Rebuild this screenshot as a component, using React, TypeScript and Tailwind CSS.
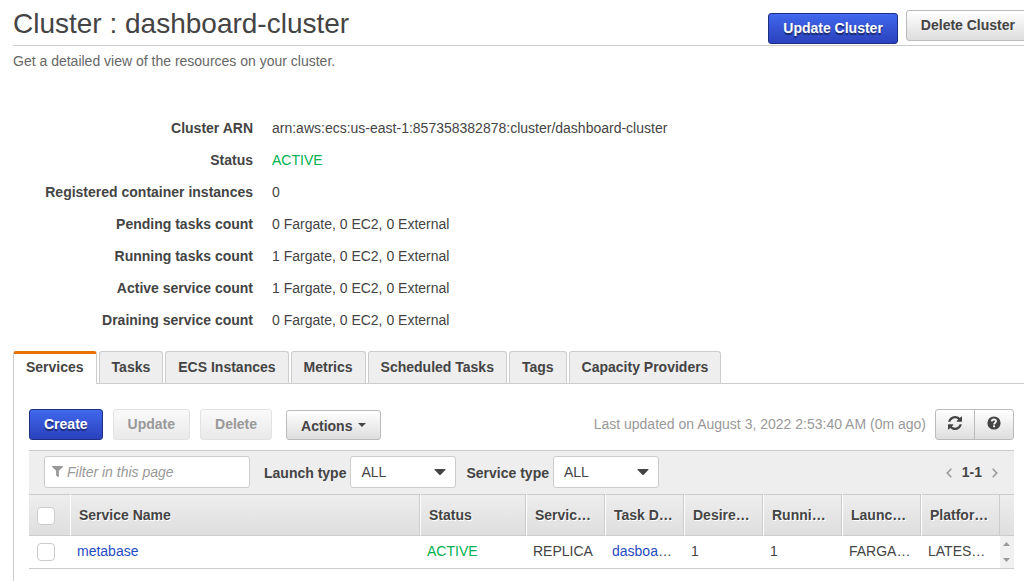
import React, { useState } from "react";
import { FaFilter } from "react-icons/fa";

const details = [
  { label: "Cluster ARN", value: "arn:aws:ecs:us-east-1:857358382878:cluster/dashboard-cluster" },
  { label: "Status", value: "ACTIVE", active: true },
  { label: "Registered container instances", value: "0" },
  { label: "Pending tasks count", value: "0 Fargate, 0 EC2, 0 External" },
  { label: "Running tasks count", value: "1 Fargate, 0 EC2, 0 External" },
  { label: "Active service count", value: "1 Fargate, 0 EC2, 0 External" },
  { label: "Draining service count", value: "0 Fargate, 0 EC2, 0 External" },
];

const tabs = ["Services", "Tasks", "ECS Instances", "Metrics", "Scheduled Tasks", "Tags", "Capacity Providers"];

const columns = ["Service Name", "Status", "Servic…", "Task D…", "Desire…", "Runni…", "Launc…", "Platfor…"];

const variants = {
  primary:
    "border-[#1c2f83] bg-linear-to-b from-[#4168ed] to-[#2b41bd] text-white [text-shadow:0_2px_1px_rgba(0,0,0,0.5)]",
  normal: "border-[#bbb] bg-linear-to-b from-white to-[#dedede] text-[#444]",
  disabled: "border-[#e2e2e2] bg-linear-to-b from-[#fafafa] to-[#e9e9e9] text-[#999]",
};

function Button({
  variant = "normal",
  className = "h-[31px] pb-[2px]",
  children,
}: {
  variant?: keyof typeof variants;
  className?: string;
  children: React.ReactNode;
}) {
  return (
    <button
      type="button"
      disabled={variant === "disabled"}
      className={`flex shrink-0 items-center rounded-[3px] border px-[14px] font-bold whitespace-nowrap ${variants[variant]} ${className}`}
    >
      {children}
    </button>
  );
}

function RefreshIcon() {
  return (
    <svg viewBox="0 0 1536 1536" className="size-[14px]" fill="currentColor" aria-hidden="true">
      <path d="M1511 928q0 5-1 7-64 268-268 434.5t-478 166.5q-146 0-282.5-55t-243.5-157l-129 129q-19 19-45 19t-45-19-19-45v-448q0-26 19-45t45-19h448q26 0 45 19t19 45-19 45l-137 137q71 66 161 102t187 36q134 0 250-65t186-179q11-17 53-117 8-23 30-23h192q13 0 22.5 9.5t9.5 22.5zm25-800v448q0 26-19 45t-45 19h-448q-26 0-45-19t-19-45 19-45l138-138q-148-137-349-137-134 0-250 65t-186 179q-11 17-53 117-8 23-30 23h-199q-13 0-22.5-9.5t-9.5-22.5v-7q65-268 270-434.5t480-166.5q146 0 284 55.5t245 156.5l130-129q19-19 45-19t45 19 19 45z" />
    </svg>
  );
}

function HelpIcon() {
  return (
    <svg viewBox="0 0 14 14" className="size-[14px]" aria-hidden="true">
      <circle cx="7" cy="7" r="6.6" fill="#444" />
      <path d="M4.7 5.3C5 2.9 9.2 3 9.1 5.3 9 6.7 7.1 6.7 7.1 8.4" fill="none" stroke="#f4f4f4" strokeWidth="1.9" />
      <path d="M6.1 9.3h2v1.9h-2z" fill="#f4f4f4" />
    </svg>
  );
}

function Chevron({ d }: { d: string }) {
  return (
    <svg viewBox="0 0 6 10" className="h-[10px] w-[6px]" fill="none" stroke="#999" strokeWidth="1.6" aria-hidden="true">
      <path d={d} />
    </svg>
  );
}

function FilterSelect({ id, label, options }: { id: string; label: string; options: string[] }) {
  return (
    <div className="flex shrink-0 items-center gap-1">
      <label htmlFor={id} className="pt-[2px] font-bold">
        {label}
      </label>
      <div className="relative">
        <select
          id={id}
          className="h-8 w-[106px] appearance-none rounded-[3px] border border-[#ccc] bg-white px-[10px] text-[#444]"
        >
          {options.map((o) => (
            <option key={o}>{o}</option>
          ))}
        </select>
        <svg
          viewBox="0 0 12 6"
          className="pointer-events-none absolute top-[13px] right-[10px] h-[6px] w-3"
          fill="#444"
          aria-hidden="true"
        >
          <path d="M1 0h10q1 0 .3.9L6.7 5.7q-.7.5-1.4 0L.7.9Q0 0 1 0z" />
        </svg>
      </div>
    </div>
  );
}

const tick = "block size-[18px] appearance-none rounded-[4px] border border-[#ccc] bg-white checked:bg-[#4168ed]";
const cell = "pl-[7px] pb-[2px] whitespace-nowrap";
const link = "text-[#1f4bc4] hover:underline";

export default function App() {
  const [tab, setTab] = useState("Services");

  return (
    <div className="flex min-h-screen flex-col overflow-hidden bg-white pl-[13px] font-['Liberation_Sans',Arial,sans-serif] text-[14px] leading-5 text-[#444]">
      <header className="flex h-[46px] justify-between border-b border-[#ccc]">
        <h1 className="self-center pt-[2px] text-[28px] leading-8 whitespace-nowrap">Cluster : dashboard-cluster</h1>
        <div className="-mr-[6px] flex gap-2 pt-[10px] pb-px">
          <Button variant="primary" className="h-[31px] self-end pb-[2px]">
            Update Cluster
          </Button>
          <Button className="h-[31px] self-start pb-[2px]">Delete Cluster</Button>
        </div>
      </header>
      <p className="mt-[5px] text-[#666]">Get a detailed view of the resources on your cluster.</p>

      <dl className="mt-[41px] grid grid-cols-[240px_1fr] gap-x-[19px]">
        {details.map((d) => (
          <React.Fragment key={d.label}>
            <dt className="text-right leading-8 font-bold">{d.label}</dt>
            <dd className={`leading-8 ${d.active ? "text-[#00b14f]" : ""}`}>{d.value}</dd>
          </React.Fragment>
        ))}
      </dl>

      <main className="mt-[15px] flex flex-1 flex-col">
        <div role="tablist" className="flex gap-[2px] border-b border-[#ccc]">
          {tabs.map((t) => (
            <button
              key={t}
              type="button"
              role="tab"
              aria-selected={t === tab}
              onClick={() => setTab(t)}
              className={`rounded-t-[3px] border-x border-[#ccc] px-3 font-bold whitespace-nowrap ${
                t === tab
                  ? "relative -mb-px h-[33px] border-t-[3px] border-t-[#e87200] bg-white pb-1"
                  : "h-8 border-t bg-[#eee] pb-[2px]"
              }`}
            >
              {t}
            </button>
          ))}
        </div>

        <section className="flex-1 border-l border-[#ccc] pt-[25px] pr-[10px] pl-[15px]">
          <div className="flex items-end">
            <div className="flex items-end gap-[10px]">
              <Button variant="primary">Create</Button>
              <Button variant="disabled">Update</Button>
              <Button variant="disabled">Delete</Button>
            </div>
            <Button className="ml-[14px] h-[30px] gap-[6px] pt-[2px]">
              Actions
              <svg viewBox="0 0 8 4" className="mb-[2px] h-1 w-2" fill="currentColor" aria-hidden="true">
                <path d="M0 0h8L4 4z" />
              </svg>
            </Button>
            <p className="ml-auto self-center pr-[9px] pb-[2px] whitespace-nowrap text-[#999]">
              Last updated on August 3, 2022 2:53:40 AM (0m ago)
            </p>
            <div className="flex h-[31px] divide-x divide-[#bbb] rounded-[3px] border border-[#bbb] bg-linear-to-b from-white to-[#dedede]">
              <button type="button" aria-label="Refresh" className="flex w-[39px] items-center justify-center pb-[3px]">
                <RefreshIcon />
              </button>
              <button type="button" aria-label="Help" className="flex w-[38px] items-center justify-center pb-[3px]">
                <HelpIcon />
              </button>
            </div>
          </div>

          <div className="mt-[10px] flex h-11 items-center border-t border-[#ccc] bg-[#eee] pr-4 pb-px pl-[15px]">
            <div className="relative mr-[14px]">
              <FaFilter className="pointer-events-none absolute top-[10px] left-2 size-[11px] text-[#999]" />
              <input
                type="text"
                aria-label="Filter in this page"
                placeholder="Filter in this page"
                className="h-8 w-[206px] rounded-[3px] border border-[#ccc] bg-white pr-2 pl-[22px] placeholder:text-[#999] placeholder:italic"
              />
            </div>
            <div className="flex gap-[10px]">
              <FilterSelect id="launch-type" label="Launch type" options={["ALL"]} />
              <FilterSelect id="service-type" label="Service type" options={["ALL"]} />
            </div>
            <nav className="ml-auto flex items-center gap-[10px] font-bold" aria-label="Pages">
              <button type="button" aria-label="Previous page" className="pt-[2px]">
                <Chevron d="M5.3.7 1.3 5l4 4.3" />
              </button>
              1-1
              <button type="button" aria-label="Next page" className="pt-[2px]">
                <Chevron d="M.7.7l4 4.3-4 4.3" />
              </button>
            </nav>
          </div>

          <table className="w-full table-fixed border-separate border-spacing-0">
            <colgroup>
              <col className="w-[41px]" />
              <col />
              <col className="w-[106px]" />
              <col className="w-[79px]" />
              <col className="w-[79px]" />
              <col className="w-[79px]" />
              <col className="w-[79px]" />
              <col className="w-[79px]" />
              <col className="w-[79px]" />
              <col className="w-[14px]" />
            </colgroup>
            <thead>
              <tr className="h-[42px] bg-linear-to-b from-[#eee] to-[#dedede]">
                <th className="border-y border-[#ccc] pt-[2px] pl-2">
                  <input type="checkbox" aria-label="Select all services" className={tick} />
                </th>
                {columns.map((c) => (
                  <th
                    key={c}
                    className="border-y border-r border-l border-[#ccc] border-l-white pl-[8px] text-left font-bold whitespace-nowrap [text-shadow:1px_1px_0_#fff]"
                  >
                    {c}
                  </th>
                ))}
                <th className="border-y border-[#ccc]" />
              </tr>
            </thead>
            <tbody>
              <tr className="h-[33px] [&>td]:border-b [&>td]:border-[#ccc]">
                <td className="pl-2">
                  <input type="checkbox" aria-label="Select metabase" className={tick} />
                </td>
                <td className={cell}>
                  <a href="#metabase" className={link}>
                    metabase
                  </a>
                </td>
                <td className={`${cell} text-[#00b14f]`}>ACTIVE</td>
                <td className={cell}>REPLICA</td>
                <td className={cell}>
                  <a href="#task-definition" className={link}>
                    dasboa
                  </a>
                  …
                </td>
                <td className={cell}>1</td>
                <td className={cell}>1</td>
                <td className={cell}>FARGA…</td>
                <td className={cell}>LATES…</td>
                <td className="bg-[#f1f1f1]">
                  <svg viewBox="0 0 14 32" className="block h-8 w-[14px]" fill="#999" aria-hidden="true">
                    <path d="M3 10l3.5-4 3.5 4zM3 22l3.5 4 3.5-4z" />
                  </svg>
                </td>
              </tr>
            </tbody>
          </table>
        </section>
      </main>
    </div>
  );
}
